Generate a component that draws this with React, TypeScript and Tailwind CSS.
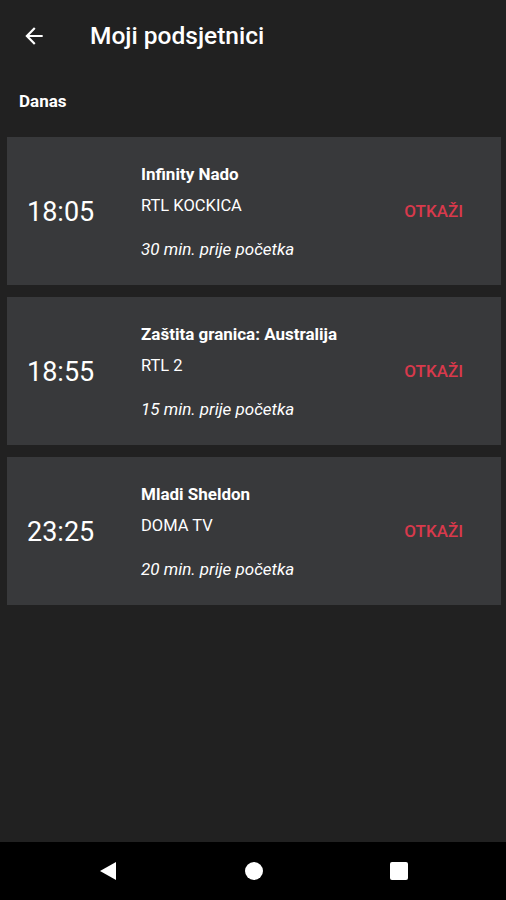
import React from 'react';

const reminders = [
  { time: '18:05', title: 'Infinity Nado', channel: 'RTL KOCKICA', note: '30 min. prije početka' },
  { time: '18:55', title: 'Zaštita granica: Australija', channel: 'RTL 2', note: '15 min. prije početka' },
  { time: '23:25', title: 'Mladi Sheldon', channel: 'DOMA TV', note: '20 min. prije početka' },
];

function ReminderCard({ time, title, channel, note }: (typeof reminders)[number]) {
  return (
    <div className="flex items-center h-[148px] bg-[#38393b] px-5">
      <div className="w-[114px] mt-[3px] text-[27px] text-white leading-none">{time}</div>
      <div className="flex-1 flex flex-col text-white">
        <div className="text-[17px] font-bold leading-5">{title}</div>
        <div className="text-[16.5px] leading-5 mt-3">{channel}</div>
        <div className="text-[17px] italic leading-5 mt-[23px]">{note}</div>
      </div>
      <button className="mt-[1px] text-[17px] font-medium text-[#d9394c] mr-[18px]">OTKAŽI</button>
    </div>
  );
}

export default function App() {
  return (
    <div className="w-[506px] h-[900px] flex flex-col bg-[#212121]" style={{ fontFamily: 'Roboto, "Noto Sans", sans-serif' }}>
      <header className="flex items-center h-[72px] pl-[21px]">
        <svg viewBox="0 0 24 24" className="w-[26px] h-[26px] fill-white">
          <path d="M20 11H7.83l5.59-5.59L12 4l-8 8 8 8 1.41-1.41L7.83 13H20v-2z" />
        </svg>
        <h1 className="ml-[43px] mt-[1px] text-[24.5px] font-medium text-white">Moji podsjetnici</h1>
      </header>
      <div className="px-[19px] pt-[18px] pb-[25px] text-[17px] leading-[22px] font-bold text-white">Danas</div>
      <main className="flex-1 flex flex-col gap-3 px-[7px] pr-[5px]">
        {reminders.map((r) => (
          <ReminderCard key={r.time} {...r} />
        ))}
      </main>
      <nav className="h-[58px] bg-black flex items-center justify-center gap-[127px]">
        <svg viewBox="0 0 20 20" className="w-[20px] h-[20px] fill-white">
          <path d="M18 1 L2 10 L18 19 Z" />
        </svg>
        <div className="w-[18px] h-[18px] rounded-full bg-white" />
        <div className="w-[18px] h-[18px] rounded-[2px] bg-white" />
      </nav>
    </div>
  );
}
